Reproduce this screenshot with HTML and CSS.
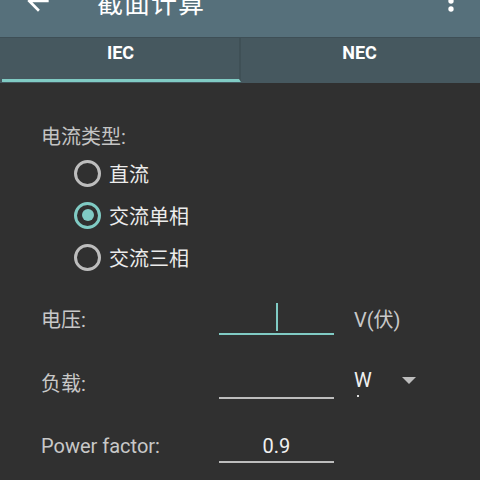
FILE: index.html
```html
<!DOCTYPE html>
<html lang="zh">
<head>
    <meta charset="UTF-8">
    <title>截面计算</title>
    <link rel="stylesheet" href="styles.css">
</head>
<body>

    <div class="toolbar">
        <svg class="back" viewBox="0 0 24 24" width="32" height="32">
            <path d="M20 11H7.83l5.59-5.59L12 4l-8 8 8 8 1.41-1.41L7.83 13H20v-2z" fill="#fff"/>
        </svg>
        <span class="title">截面计算</span>
        <svg class="menu" viewBox="0 0 24 24" width="32" height="32">
            <circle cx="12" cy="6" r="2" fill="#fff"/>
            <circle cx="12" cy="12" r="2" fill="#fff"/>
            <circle cx="12" cy="18" r="2" fill="#fff"/>
        </svg>
    </div>

    <div class="tabs">
        <div class="tab active">IEC</div>
        <div class="tab">NEC</div>
    </div>

    <div class="content">
        <div class="group-label">电流类型:</div>
        <div class="radios">
            <div class="radio"><span class="dot"></span>直流</div>
            <div class="radio checked"><span class="dot"></span>交流单相</div>
            <div class="radio"><span class="dot"></span>交流三相</div>
        </div>

        <div class="form">
            <div class="label">电压:</div>
            <div class="field focused"><span class="cursor"></span></div>
            <div class="unit">V(伏)</div>

            <div class="label">负载:</div>
            <div class="field"></div>
            <div class="unit select">W<span class="tick"></span><span class="caret"></span></div>

            <div class="label">Power factor:</div>
            <div class="field">0.9</div>
            <div class="unit"></div>
        </div>
    </div>

</body>
</html>
```

FILE: styles.css
```css
body {
    margin: 0;
    background-color: #303030;
    font-family: Roboto, "Noto Sans CJK SC", sans-serif;
    color: #e6e6e6;
    overflow: hidden;
}

.toolbar {
    height: 72px;
    margin-top: -35px;
    background-color: #56707b;
    display: flex;
    align-items: center;
    padding-left: 22px;
}

.title {
    margin-left: 43px;
    font-size: 26px;
    color: #fff;
    letter-spacing: 1px;
    flex: 1;
}

.menu {
    margin-right: 13px;
}

.tabs {
    display: flex;
    height: 45px;
    background-color: #46585f;
    border-top: 1px solid #3e4f56;
    padding: 0 2px;
}

.tab {
    flex: 1;
    text-align: center;
    font-size: 18px;
    font-weight: bold;
    color: #fff;
    line-height: 30px;
    border-bottom: 3px solid transparent;
    margin-bottom: 1px;
}

.tab.active {
    border-bottom-color: #80cbc4;
    border-right: 2px solid #3f5056;
}

.content {
    padding-left: 41px;
}

.group-label {
    margin-top: 42px;
    font-size: 20px;
    line-height: 24px;
    color: #c4c4c4;
}

.radios {
    margin-top: 3px;
    padding-left: 33px;
}

.radio {
    height: 42px;
    display: flex;
    align-items: center;
    font-size: 20px;
    color: #ececec;
}

.dot {
    width: 21px;
    height: 21px;
    border: 3px solid #bdbdbd;
    border-radius: 50%;
    margin-right: 8px;
    display: flex;
    align-items: center;
    justify-content: center;
}

.radio.checked .dot {
    border-color: #80cbc4;
}

.radio.checked .dot::after {
    content: "";
    width: 12px;
    height: 12px;
    border-radius: 50%;
    background-color: #80cbc4;
}

.form {
    margin-top: 8px;
    display: grid;
    grid-template-columns: 158px 115px auto;
    grid-auto-rows: 64px;
    column-gap: 20px;
    align-items: center;
}

.label {
    font-size: 20px;
    color: #c8c8c8;
}

.field {
    height: 30px;
    border-bottom: 2px solid #bdbdbd;
    margin-top: 1px;
    font-size: 20px;
    line-height: 30px;
    text-align: center;
    color: #f0f0f0;
    display: flex;
    justify-content: center;
}

.field.focused {
    border-bottom-color: #80cbc4;
}

.cursor {
    width: 2px;
    height: 28px;
    background-color: #80cbc4;
}

.unit {
    font-size: 20px;
    color: #c8c8c8;
}

.select {
    display: flex;
    align-items: center;
    color: #f0f0f0;
    position: relative;
    margin-top: -4px;
}

.tick {
    position: absolute;
    left: 3px;
    top: 27px;
    width: 2px;
    height: 2px;
    background-color: #ddd;
}

.caret {
    margin-left: 30px;
    width: 0;
    height: 0;
    border-left: 7px solid transparent;
    border-right: 7px solid transparent;
    border-top: 7px solid #bdbdbd;
}
```
